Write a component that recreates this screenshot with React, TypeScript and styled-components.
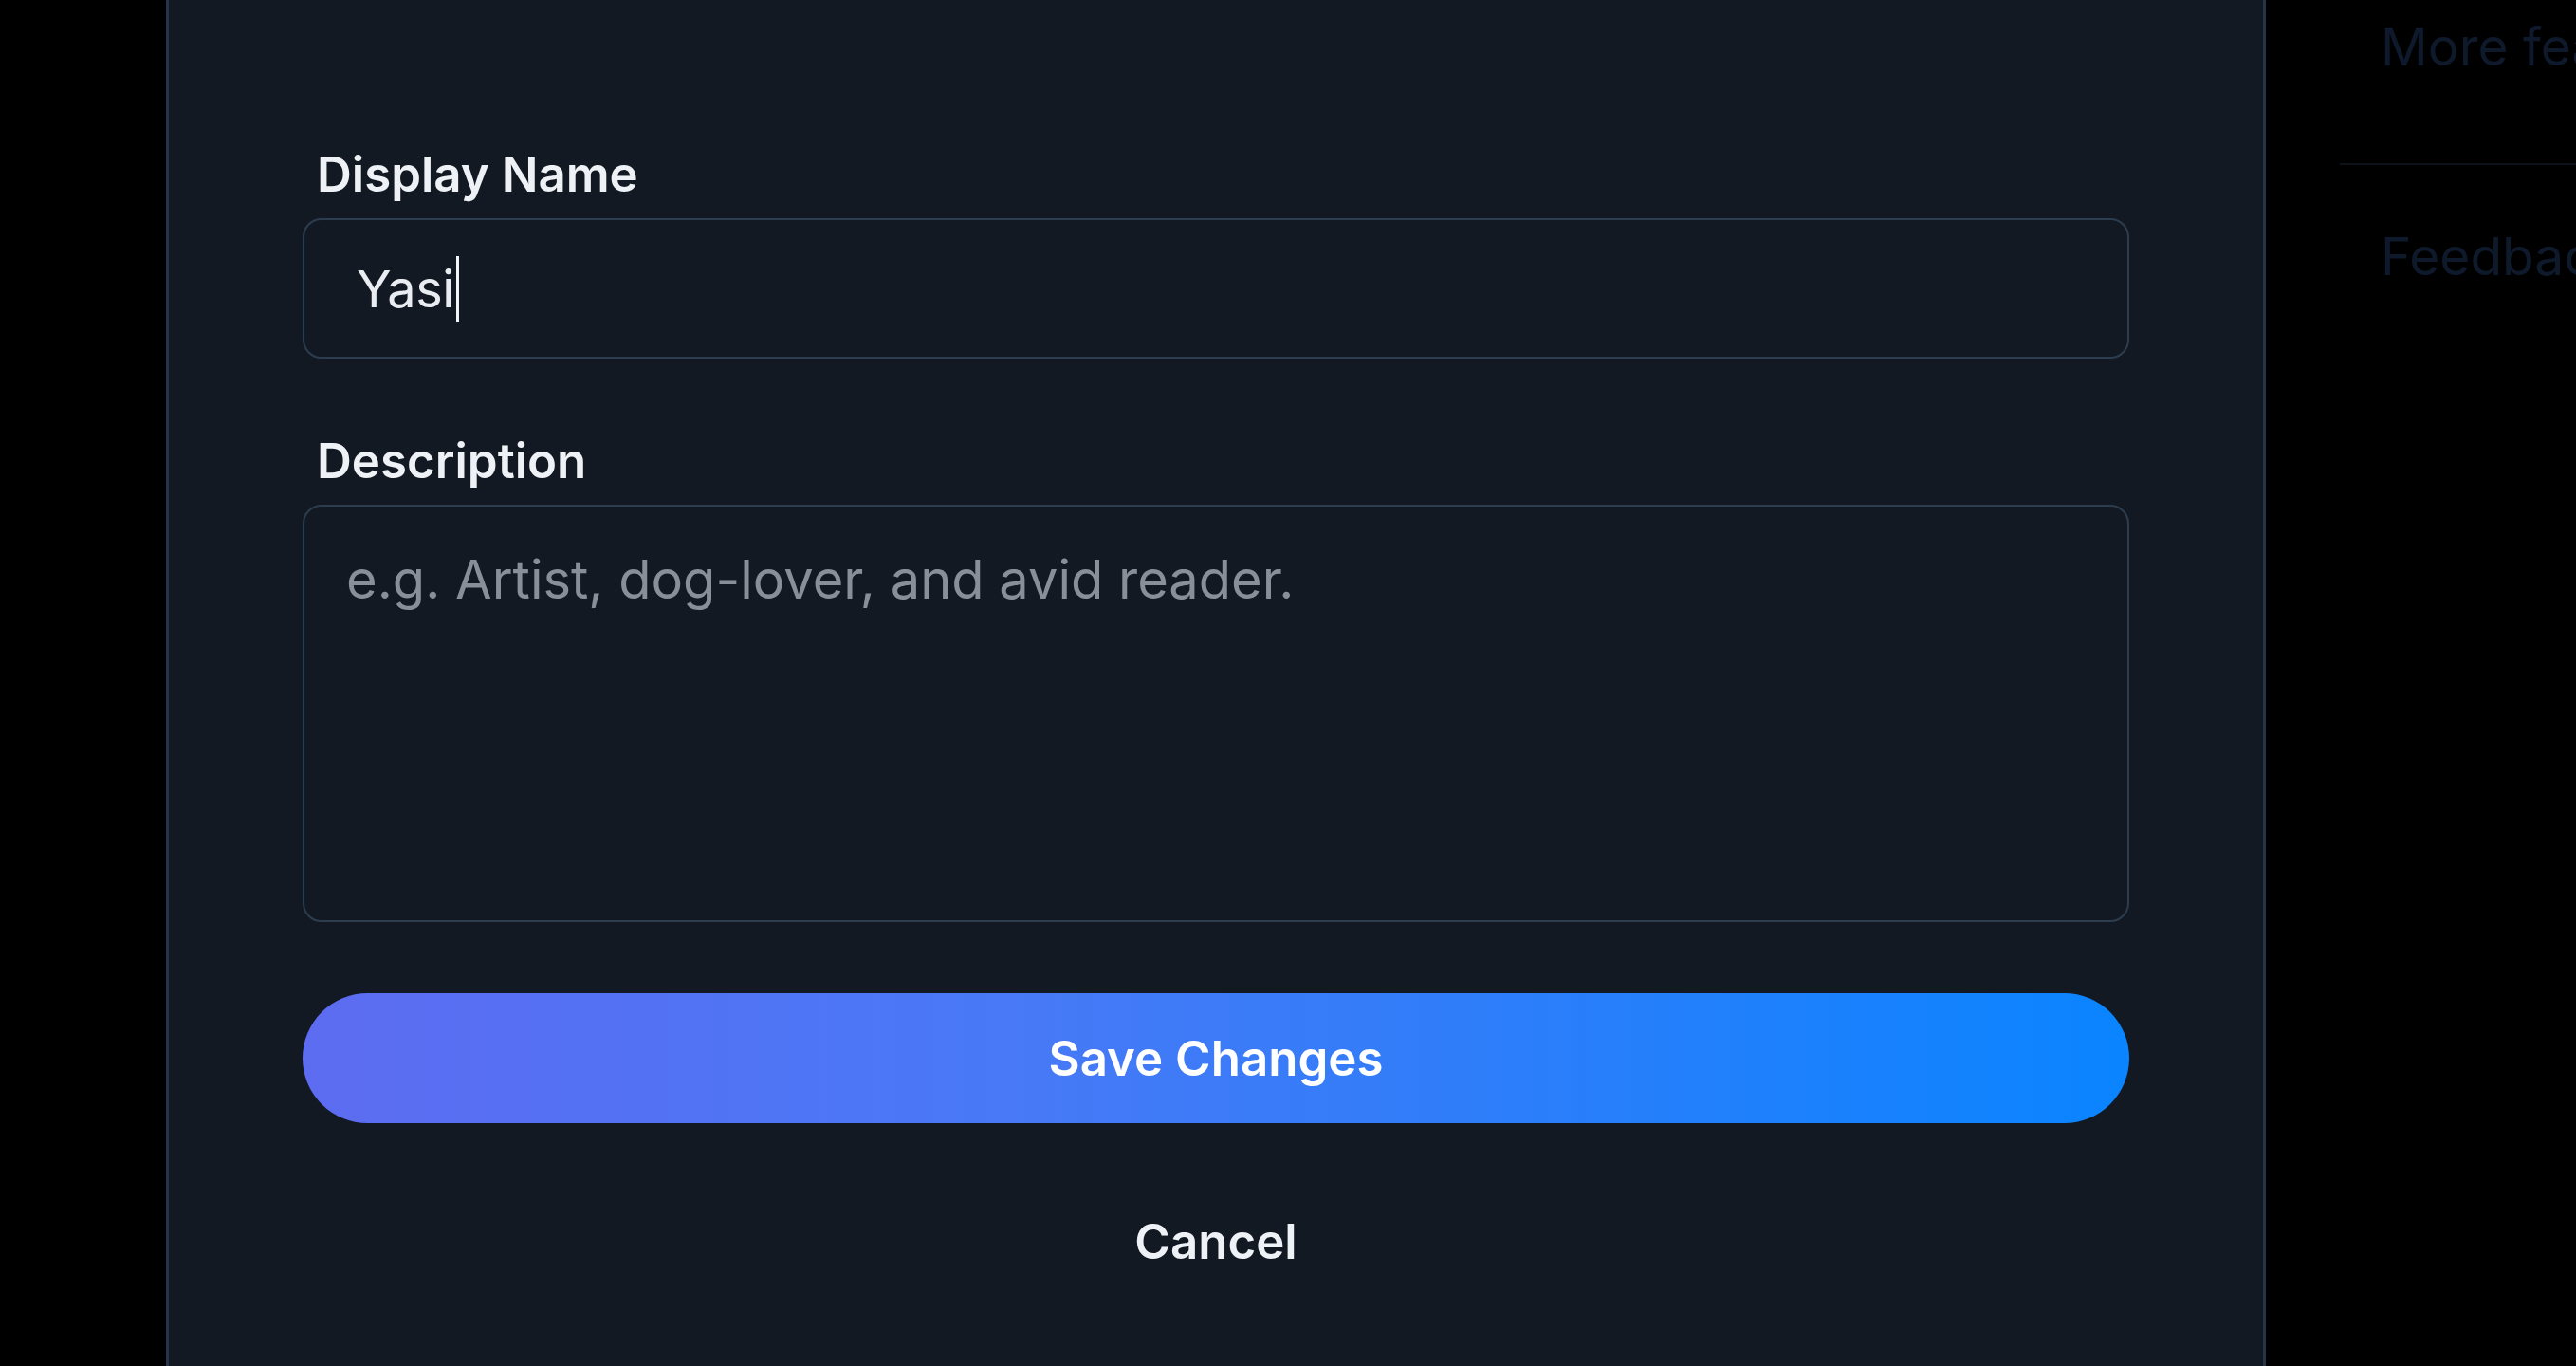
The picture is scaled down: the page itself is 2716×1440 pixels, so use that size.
import React from 'react';
import styled, { createGlobalStyle } from 'styled-components';

const GlobalStyle = createGlobalStyle`
  html, body {
    margin: 0;
    padding: 0;
    background: #000000;
    font-family: Inter, 'Noto Sans', sans-serif;
    overflow: hidden;
  }
`;

const EditProfilePage = () => {
  const sideLinks = ['More features', 'Feedback'];

  return (
    <>
      <GlobalStyle />
      <Page>
        <Backdrop />
        <Sheet>
          <Field>
            <Label>Display Name</Label>
            <InputBox>
              <Value>Yasi</Value>
              <Caret />
            </InputBox>
          </Field>
          <Field $spaced>
            <Label>Description</Label>
            <TextArea placeholder="e.g. Artist, dog-lover, and avid reader." />
          </Field>
          <SaveButton type="button">Save Changes</SaveButton>
          <CancelButton type="button">Cancel</CancelButton>
        </Sheet>
        <Aside>
          {sideLinks.map((link, index) => (
            <SideItem key={link} $first={index === 0}>
              {link}
            </SideItem>
          ))}
        </Aside>
      </Page>
    </>
  );
};

export default EditProfilePage;

const Page = styled.div`
  display: flex;
  width: 100vw;
  height: 100vh;
  overflow: hidden;
  background: #000000;
`;

const Backdrop = styled.div`
  flex: 0 0 175px;
`;

const Sheet = styled.main`
  flex: 0 0 2214px;
  box-sizing: border-box;
  display: flex;
  flex-direction: column;
  padding: 153px 141px 0;
  background-color: #131922;
  border-left: 3px solid #26364a;
  border-right: 3px solid #26364a;
`;

const Field = styled.div<{ $spaced?: boolean }>`
  display: flex;
  flex-direction: column;
  margin-top: ${({ $spaced }) => ($spaced ? '77px' : '0')};
`;

const Label = styled.label`
  margin: 0 0 16px 15px;
  font-size: 51px;
  line-height: 61px;
  font-weight: 600;
  color: #eef1f5;
`;

const InputBox = styled.div`
  box-sizing: border-box;
  display: flex;
  align-items: center;
  height: 148px;
  padding: 0 55px;
  border: 2px solid #2d3d50;
  border-radius: 20px;
  background-color: #131922;
`;

const Value = styled.span`
  font-size: 54px;
  font-weight: 400;
  color: #e9edf2;
  letter-spacing: -0.5px;
`;

const Caret = styled.span`
  width: 3px;
  height: 69px;
  margin-left: 2px;
  background-color: #f2f4f7;
`;

const TextArea = styled.textarea`
  box-sizing: border-box;
  height: 440px;
  padding: 44px 44px;
  border: 2px solid #2d3d50;
  border-radius: 20px;
  background-color: #131922;
  color: #e9edf2;
  font-family: Inter, 'Noto Sans', sans-serif;
  font-size: 56px;
  line-height: 66px;
  resize: none;
  outline: none;

  &::placeholder {
    color: #888f99;
  }
`;

const SaveButton = styled.button`
  margin-top: 75px;
  height: 137px;
  border: none;
  border-radius: 999px;
  background: linear-gradient(90deg, #5d6cf1 0%, #4779f6 40%, #0a84ff 100%);
  color: #ffffff;
  font-family: Inter, 'Noto Sans', sans-serif;
  font-size: 51px;
  font-weight: 600;
  cursor: pointer;
`;

const CancelButton = styled.button`
  align-self: center;
  margin-top: 94px;
  padding: 0;
  border: none;
  background: none;
  color: #eef1f5;
  font-family: Inter, 'Noto Sans', sans-serif;
  font-size: 51px;
  line-height: 61px;
  font-weight: 600;
  cursor: pointer;
`;

const Aside = styled.aside`
  flex: 1;
  min-width: 0;
  padding-left: 78px;
  overflow: hidden;
`;

const SideItem = styled.div<{ $first?: boolean }>`
  padding: ${({ $first }) => ($first ? '16px 0 90px 43px' : '63px 0 0 43px')};
  border-bottom: ${({ $first }) => ($first ? '2px solid #0d1219' : 'none')};
  color: #0e1a2b;
  font-size: 55px;
  line-height: 66px;
  white-space: nowrap;
`;
